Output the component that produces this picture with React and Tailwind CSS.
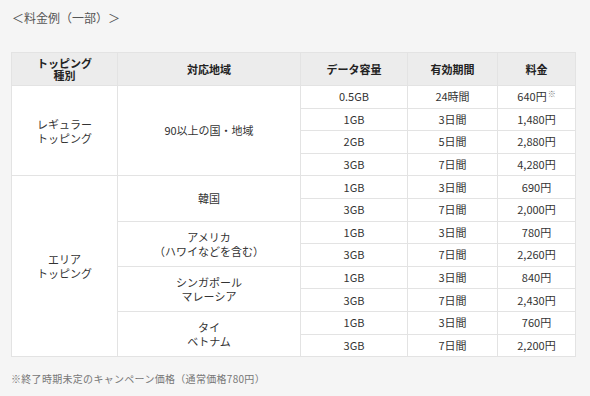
import React from "react";

const regular = [
  ["0.5GB", "24時間", "640円", true],
  ["1GB", "3日間", "1,480円"],
  ["2GB", "5日間", "2,880円"],
  ["3GB", "7日間", "4,280円"],
];

const areas = [
  { name: ["韓国"], rows: [["1GB", "3日間", "690円"], ["3GB", "7日間", "2,000円"]] },
  { name: ["アメリカ", "（ハワイなどを含む）"], rows: [["1GB", "3日間", "780円"], ["3GB", "7日間", "2,260円"]] },
  { name: ["シンガポール", "マレーシア"], rows: [["1GB", "3日間", "840円"], ["3GB", "7日間", "2,430円"]] },
  { name: ["タイ", "ベトナム"], rows: [["1GB", "3日間", "760円"], ["3GB", "7日間", "2,200円"]] },
];

const td = "border border-[#e3e3e3] bg-white text-center align-middle h-[22.6px] p-0";

const Cells = ({ row }) => (
  <>
    <td className={td}>{row[0]}</td>
    <td className={td}>{row[1]}</td>
    <td className={td}>
      {row[2]}
      {row[3] && <sup className="text-[8px] text-[#777] ml-px">※</sup>}
    </td>
  </>
);

export default function App() {
  return (
    <div
      className="w-[590px] h-[396px] bg-[#f5f5f5] px-[11px] pt-[9px] text-[#333]"
      style={{ fontFamily: '"Noto Sans CJK JP", "Noto Sans", sans-serif' }}
    >
      <p className="text-[12px] leading-[18px] text-[#555] pl-px">＜料金例（一部）＞</p>

      <table className="mt-[25px] w-[564px] border-collapse table-fixed text-[11px] leading-[13px]">
        <colgroup>
          <col className="w-[106px]" />
          <col className="w-[183px]" />
          <col className="w-[107px]" />
          <col className="w-[90px]" />
          <col className="w-[78px]" />
        </colgroup>
        <thead>
          <tr className="bg-[#ececec] font-bold text-[#222]">
            <th className="border border-[#e3e3e3] h-[33px] leading-[12px]">
              トッピング
              <br />
              種別
            </th>
            <th className="border border-[#e3e3e3]">対応地域</th>
            <th className="border border-[#e3e3e3]">データ容量</th>
            <th className="border border-[#e3e3e3]">有効期間</th>
            <th className="border border-[#e3e3e3]">料金</th>
          </tr>
        </thead>
        <tbody>
          {regular.map((row, i) => (
            <tr key={i}>
              {i === 0 && (
                <>
                  <td rowSpan={4} className={`${td} leading-[14px]`}>
                    レギュラー
                    <br />
                    トッピング
                  </td>
                  <td rowSpan={4} className={td}>
                    90以上の国・地域
                  </td>
                </>
              )}
              <Cells row={row} />
            </tr>
          ))}
          {areas.map((area, a) =>
            area.rows.map((row, i) => (
              <tr key={`${a}-${i}`}>
                {a === 0 && i === 0 && (
                  <td rowSpan={8} className={`${td} leading-[14px]`}>
                    エリア
                    <br />
                    トッピング
                  </td>
                )}
                {i === 0 && (
                  <td rowSpan={2} className={`${td} leading-[14px]`}>
                    {area.name.map((n, k) => (
                      <div key={k}>{n}</div>
                    ))}
                  </td>
                )}
                <Cells row={row} />
              </tr>
            ))
          )}
        </tbody>
      </table>

      <p className="mt-[15px] text-[10px] leading-[14px] tracking-[0.3px] text-[#777]">
        ※終了時期未定のキャンペーン価格（通常価格780円）
      </p>
    </div>
  );
}
